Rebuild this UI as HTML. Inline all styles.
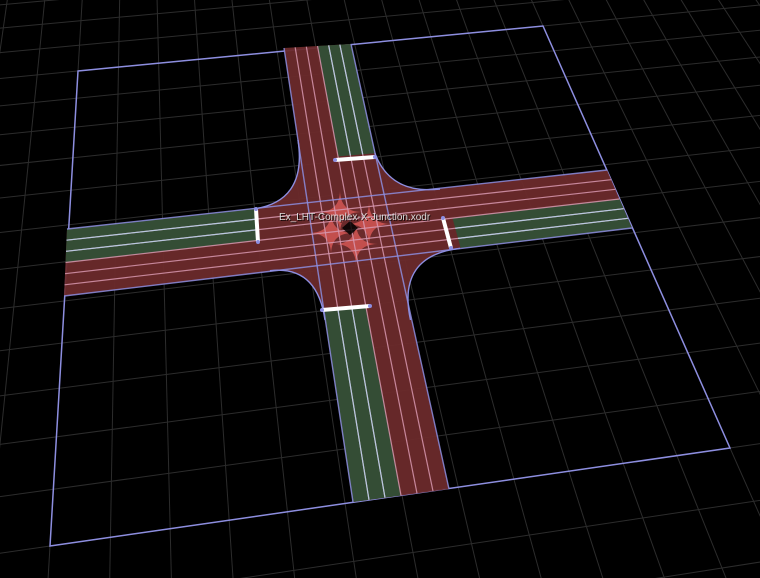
<!DOCTYPE html>
<html><head><meta charset="utf-8"><style>
html,body{margin:0;padding:0;background:#000;width:760px;height:578px;overflow:hidden}
svg{display:block;position:absolute;left:0;top:0}
text{font-family:"Liberation Sans",sans-serif}
</style></head><body>
<svg id="s" width="760" height="578" viewBox="0 0 760 578" xmlns="http://www.w3.org/2000/svg">
<rect width="760" height="578" fill="#000"/>
<g id="grid" stroke="#2c2c2c" stroke-width="1" fill="none"></g>
<g id="roads"></g>
<text x="280" y="221" font-size="10" fill="#000" opacity="0.8">Ex_LHT-Complex-X-Junction.xodr</text>
<text x="279" y="220" font-size="10" fill="#dcdcdc">Ex_LHT-Complex-X-Junction.xodr</text>
</svg>
<script>
(function(){
var NS="http://www.w3.org/2000/svg";
function el(p,t,a){var e=document.createElementNS(NS,t);for(var k in a)e.setAttribute(k,a[k]);p.appendChild(e);return e;}
var P=[[78,71],[543,26],[730,448],[50,546]];
function homog(P){
 var x0=P[0][0],y0=P[0][1],x1=P[1][0],y1=P[1][1],x2=P[2][0],y2=P[2][1],x3=P[3][0],y3=P[3][1];
 var dx1=x1-x2,dx2=x3-x2,dy1=y1-y2,dy2=y3-y2,sx=x0-x1+x2-x3,sy=y0-y1+y2-y3;
 var den=dx1*dy2-dx2*dy1;
 var g=(sx*dy2-dx2*sy)/den,h=(dx1*sy-sx*dy1)/den;
 var a=x1-x0+g*x1,b=x3-x0+h*x3,c=x0,d=y1-y0+g*y1,e=y3-y0+h*y3,f=y0;
 return function(u,v){var w=g*u+h*v+1;return [(a*u+b*v+c)/w,(d*u+e*v+f)/w];};
}
var H=homog(P);
var G=document.getElementById('grid');
var N=12;
for(var k=-8;k<=N+8;k++){
 var u=k/N;
 var A=H(u,-0.9),B=H(u,1.3);
 el(G,'line',{x1:A[0],y1:A[1],x2:B[0],y2:B[1]});
 var C=H(-0.9,u),D=H(1.6,u);
 el(G,'line',{x1:C[0],y1:C[1],x2:D[0],y2:D[1]});
}
var R=document.getElementById('roads');
var red="#6c2a2b",green="#344d35",edge="#8d8ee0";
function poly(pts,fill,op){el(R,'polygon',{points:pts.map(function(p){return p.join(',')}).join(' '),fill:fill,opacity:op||0.95});}
function lerp(a,b,t){return [a[0]+(b[0]-a[0])*t,a[1]+(b[1]-a[1])*t];}
el(R,'polygon',{points:P.map(function(p){return p.join(',')}).join(' '),fill:'none',stroke:edge,'stroke-width':1.5});
var VT=[[284,48],[351,44]],VB=[[353,502],[449,489]];
function vpt(i,t){return lerp(lerp(VT[0],VT[1],i/6),lerp(VB[0],VB[1],i/6),t);}
var HL=[[67,229],[64,296]],HR=[[607,170],[632,228]];
function hpt(i,t){return lerp(lerp(HL[0],HL[1],i/6),lerp(HR[0],HR[1],i/6),t);}
poly([vpt(0,0),vpt(6,0),vpt(6,1),vpt(0,1)],red);
poly([hpt(0,0),hpt(0,1),hpt(6,1),hpt(6,0)],red);
function fil(s,c,e){
 el(R,'path',{d:'M'+s+' L'+c+' L'+e+' Q'+c+' '+s+'Z',fill:red,opacity:0.95});
 el(R,'path',{d:'M'+s+' Q'+c+' '+e,fill:'none',stroke:edge,'stroke-width':1.4});
}
fil([298,140],[307.6,203.3],[250,209.5]);
fil([371,140],[383.3,195.7],[440,189]);
fil([270,270.7],[317,265.1],[325,320]);
fil([460,248.3],[396.5,255.8],[410.5,320]);
var tS=(158-47)/452, bS=(308-47)/452;
poly([vpt(3,0),vpt(6,0),vpt(6,tS),vpt(3,tS)],green,1);
poly([vpt(0,bS),vpt(3,bS),vpt(3,1),vpt(0,1)],green,1);
var lS=(256-66)/(607-66), rS=(446-66)/(610-66);
poly([hpt(0,0),hpt(3,0),hpt(3,lS),hpt(0,lS)],green,1);
poly([hpt(3,rS),hpt(6,rS),hpt(6,1),hpt(3,1)],green,1);
function star(cx,cy,r){var d='M'+(cx)+','+(cy-r)+' Q'+cx+','+cy+' '+(cx+r)+','+cy+' Q'+cx+','+cy+' '+cx+','+(cy+r)+' Q'+cx+','+cy+' '+(cx-r)+','+cy+' Q'+cx+','+cy+' '+cx+','+(cy-r)+'Z';
 el(R,'path',{d:d,fill:'#e8605c',opacity:0.7});}
star(340,212,22);star(369,224,22);star(331,233,22);star(356,244,22);
function lines(fn){
 for(var i=0;i<=6;i++){
  var a=fn(i,0),b=fn(i,1);
  var col=(i==0||i==6)?edge:'#d898b0';
  el(R,'line',{x1:a[0],y1:a[1],x2:b[0],y2:b[1],stroke:col,'stroke-width':(i==0||i==6)?1.4:1.2,opacity:0.85});
 }
}
lines(vpt);lines(hpt);
el(R,'path',{d:'M350,221 L358,228 L350,235 L342,228Z',fill:'#000',opacity:0.85});
function gl(fn,i,t0,t1){var a=fn(i,t0),b=fn(i,t1);el(R,'line',{x1:a[0],y1:a[1],x2:b[0],y2:b[1],stroke:'#b8c8e0','stroke-width':1.2});}
gl(vpt,4,0,tS);gl(vpt,5,0,tS);gl(vpt,1,bS,1);gl(vpt,2,bS,1);
gl(hpt,1,0,lS);gl(hpt,2,0,lS);gl(hpt,4,rS,1);gl(hpt,5,rS,1);
function sl(x1,y1,x2,y2){el(R,'line',{x1:x1,y1:y1,x2:x2,y2:y2,stroke:'#fff','stroke-width':4});
 el(R,'circle',{cx:x1,cy:y1,r:2,fill:edge});el(R,'circle',{cx:x2,cy:y2,r:2,fill:edge});}
sl(335,160,375,157);
sl(256,209,258,242);
sl(443,218,451,248);
sl(322,310,370,306);
})();
</script>
</body></html>
